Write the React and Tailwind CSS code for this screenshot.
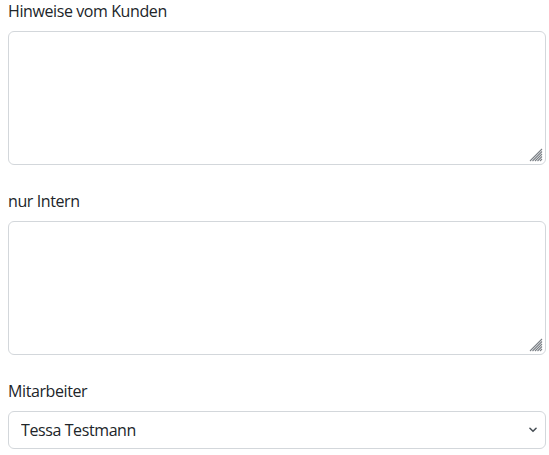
import React from 'react';

function Grip() {
    return (
        <svg
            className="absolute right-[3px] bottom-[3px] pointer-events-none"
            width="14"
            height="14"
            viewBox="0 0 14 14"
        >
            <g stroke="#7a7f85" strokeWidth="1.1">
                <line x1="1" y1="13" x2="13" y2="1" />
                <line x1="3.5" y1="13" x2="13" y2="3.5" />
                <line x1="6" y1="13" x2="13" y2="6" />
                <line x1="8.5" y1="13" x2="13" y2="8.5" />
                <line x1="11" y1="13" x2="13" y2="11" />
            </g>
        </svg>
    );
}

function Area() {
    return (
        <div className="relative w-[538px]">
            <textarea className="block w-full h-[134px] border border-[#d3d7db] rounded-[6px] px-3 py-1.5 resize-none bg-white" />
            <Grip />
        </div>
    );
}

function Field({ label, children, className = '' }) {
    return (
        <div className={className}>
            <label className="block mb-2 h-6 leading-6">{label}</label>
            {children}
        </div>
    );
}

export default function App() {
    return (
        <div
            className="px-2 text-[16px] tracking-[-0.4px] text-[#212529] bg-white w-[549px] h-[455px] overflow-hidden"
            style={{ fontFamily: '"Open Sans", "Noto Sans", sans-serif' }}
        >
            <Field label="Hinweise vom Kunden" className="-mt-px">
                <Area />
            </Field>

            <Field label="nur Intern" className="mt-[24px]">
                <Area />
            </Field>

            <Field label="Mitarbeiter" className="mt-[24px]">
                <div className="relative w-[538px]">
                    <select
                        defaultValue="tessa"
                        className="block w-full h-[38px] appearance-none border border-[#d3d7db] rounded-[6px] pl-3 pr-9 bg-white text-[#212529]"
                    >
                        <option value="tessa">Tessa Testmann</option>
                    </select>
                    <svg
                        className="absolute right-[6px] top-[12px] pointer-events-none"
                        width="14"
                        height="14"
                        viewBox="0 0 16 16"
                    >
                        <path d="M4.5 6 l3.5 3.5 l3.5 -3.5" fill="none" stroke="#495057" strokeWidth="1.8" strokeLinecap="round" strokeLinejoin="round" />
                    </svg>
                </div>
            </Field>
        </div>
    );
}
